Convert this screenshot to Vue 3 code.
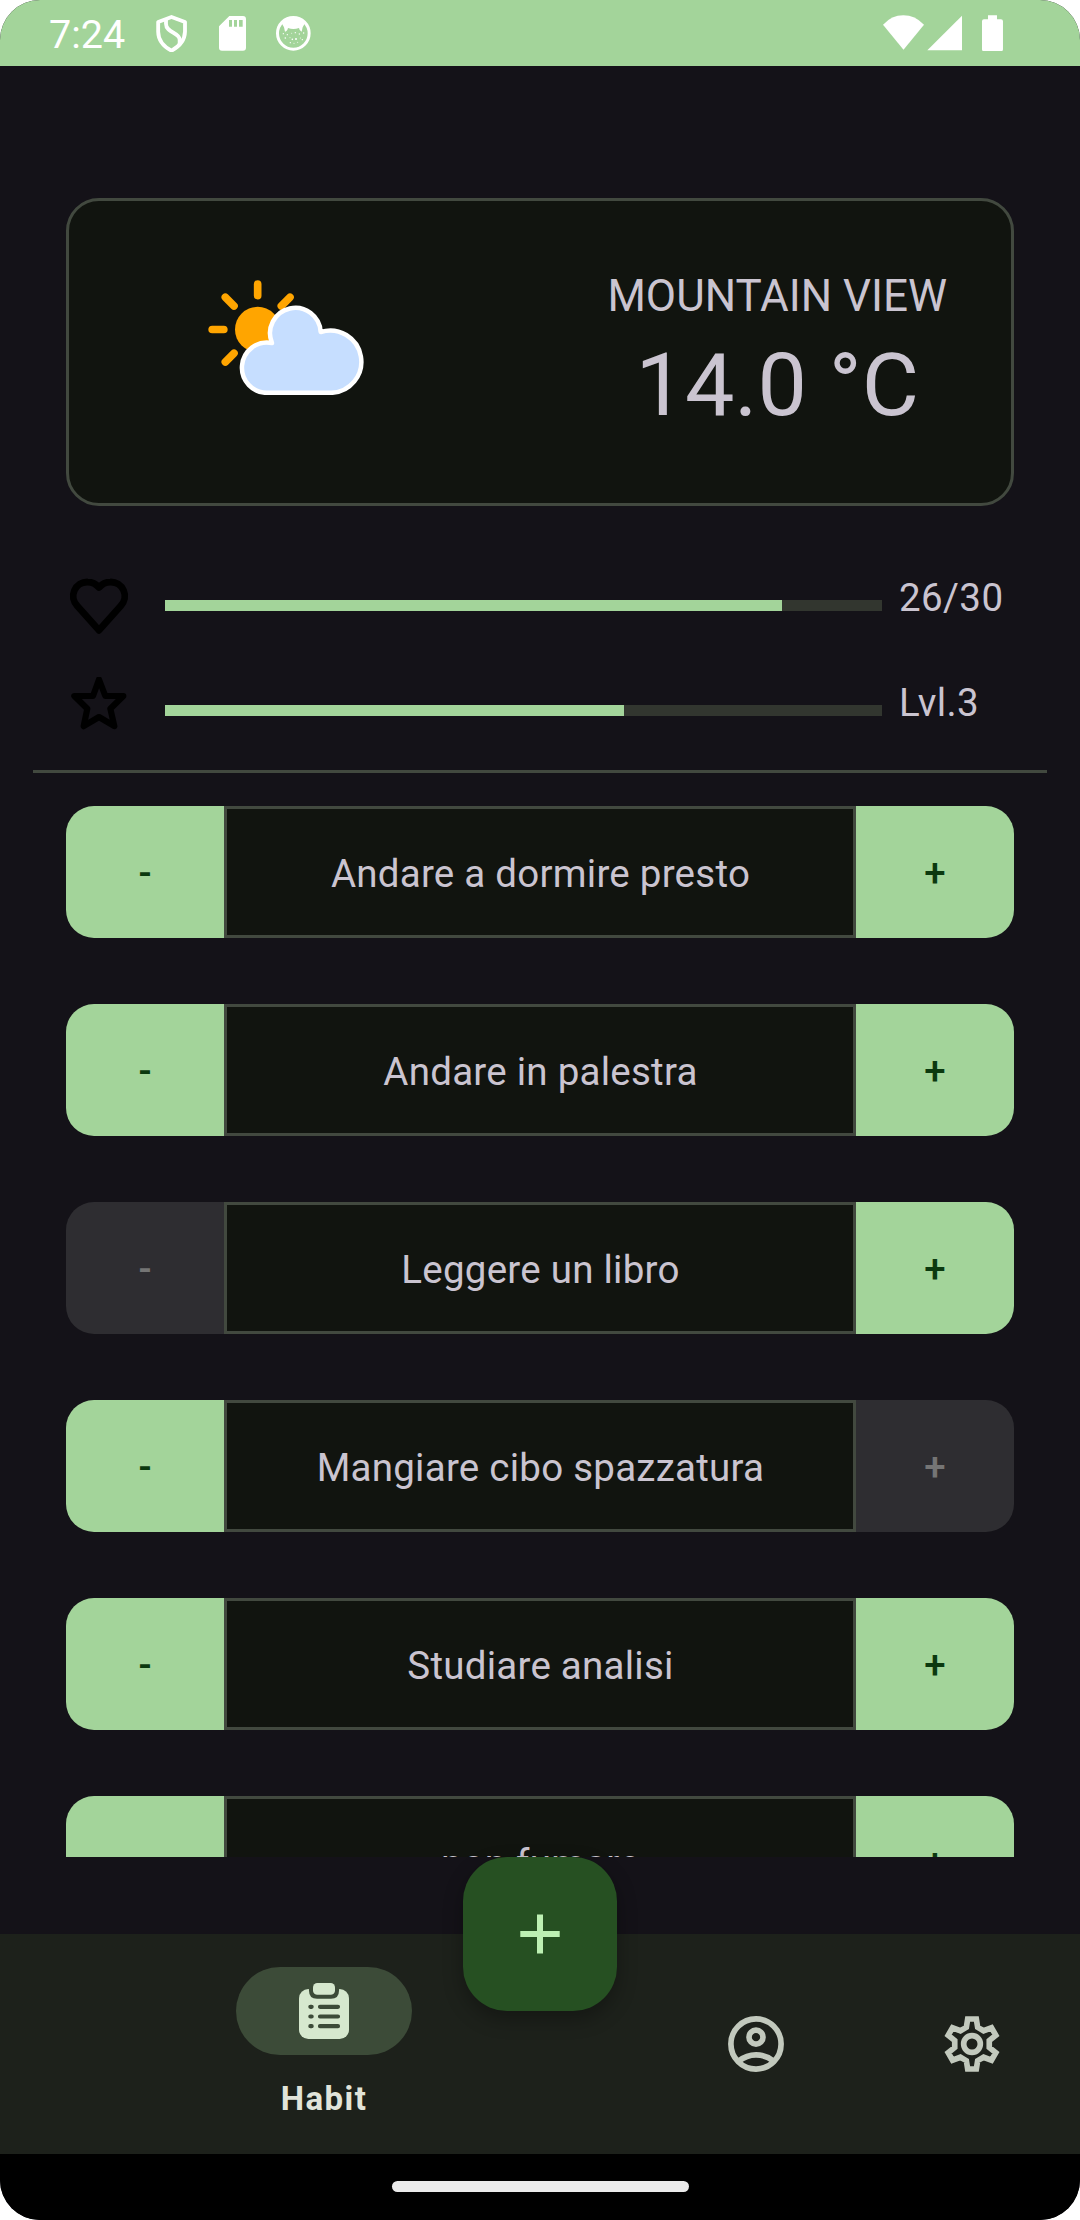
<script setup>
const stats = [
  { icon: 'heart', percent: 86.1, label: '26/30' },
  { icon: 'star', percent: 64, label: 'Lvl.3' },
]

const habits = [
  { name: 'Andare a dormire presto', minus: true, plus: true },
  { name: 'Andare in palestra', minus: true, plus: true },
  { name: 'Leggere un libro', minus: false, plus: true },
  { name: 'Mangiare cibo spazzatura', minus: true, plus: false },
  { name: 'Studiare analisi', minus: true, plus: true },
  { name: 'non fumare', minus: true, plus: true },
]
</script>

<template>
  <div class="screen">
    <header class="status">
      <span class="time">7:24</span>
      <svg class="shield" viewBox="467 44 93 113" width="31" height="37.67">
        <path d="M513.500 50L554 65V94Q553 130 513.500 151Q474 130 473.500 94V65Z" fill="none" stroke="#fff" stroke-width="11.500" stroke-linejoin="round" />
        <path d="M497 56V70C497 98 538 96 538 118V134" fill="none" stroke="#fff" stroke-width="11.500" />
      </svg>
      <svg class="sd" viewBox="657 48 81 104" width="27" height="34.67">
        <path fill="#fff" fill-rule="evenodd" d="M688 48H729Q738 48 738 57V143Q738 152 729 152H666Q657 152 657 143V79ZM687 60V80H696V60ZM702 60V80H711V60ZM717 60V80H728V60Z" />
      </svg>
      <svg class="face" viewBox="828 48 104 104" width="34.67" height="34.67">
        <circle cx="880" cy="100" r="47.500" fill="none" stroke="#fff" stroke-width="9" />
        <path fill="#fff" d="M843 66Q880 36 917 66L908 82L905 95Q898 93 897 84Q880 90 864 84Q862 94 855 95L852 82Z" />
        <g fill="#fff">
          <circle cx="850" cy="101" r="2" /><circle cx="862" cy="104" r="2" /><circle cx="875" cy="100" r="1.500" /><circle cx="886" cy="98" r="2" />
          <circle cx="898" cy="102" r="2" /><circle cx="911" cy="99" r="2" /><circle cx="856" cy="114" r="2.500" /><circle cx="870" cy="113" r="1.500" />
          <circle cx="877" cy="118" r="2.500" /><circle cx="888" cy="117" r="3" /><circle cx="901" cy="114" r="1.500" /><circle cx="907" cy="119" r="2" />
          <circle cx="871" cy="128" r="2" /><circle cx="882" cy="130" r="1.500" /><circle cx="893" cy="127" r="1.500" />
        </g>
      </svg>
      <svg class="signals" viewBox="189 44 361 110" width="120.33" height="36.67" fill="#fff">
        <path d="M189 73Q215 45 250 45T312 73L250.500 148Z" />
        <path d="M426 46V150H322Z" />
        <path d="M504 45H531V57H543Q549 57 549 63V147Q549 153 543 153H492Q486 153 486 147V63Q486 57 492 57H504Z" />
      </svg>
    </header>

    <main class="content">
      <section class="weather">
        <svg class="weather-icon" viewBox="474 299 471 346" width="157" height="115.33">
          <circle cx="623" cy="447.500" r="68" fill="#ffa500" />
          <path d="M623 311V346M486.500 447.500H521.500M526 351L552 377M720 351L694 377M526 545L552 519" stroke="#ffa500" stroke-width="23" stroke-linecap="round" />
          <path d="M654 637.500A75.500 75.500 0 1 1 666 488A76 76 0 1 1 812 455A93.500 93.500 0 1 1 843.500 637.500Z" fill="#c6deff" stroke="#fff" stroke-width="13.500" stroke-linejoin="round" />
        </svg>
        <div class="weather-text">
          <div class="city">MOUNTAIN VIEW</div>
          <div class="temp">14.0 °C</div>
        </div>
      </section>

      <section class="stats">
        <div v-for="s in stats" :key="s.icon" class="stat">
          <svg class="stat-icon" viewBox="138 66 198 198" width="66" height="66" fill="none" stroke="#000" stroke-linejoin="round">
            <path v-if="s.icon === 'heart'" d="M237 241L172 168A42.200 42.200 0 0 1 203 96Q223 96 237 112.500Q251 96 271 96A42.200 42.200 0 0 1 302 168Z" stroke-width="20.500" />
            <path v-else d="M237 73.500L256 123H310L271 161L283 213.500L237 186L191 213.500L202 161L163 123H219Z" stroke-width="18.500" />
          </svg>
          <div class="track"><div class="fill" :style="{ width: s.percent + '%' }"></div></div>
          <span class="stat-label">{{ s.label }}</span>
        </div>
      </section>

      <hr class="divider" />

      <section class="habits">
        <div v-for="h in habits" :key="h.name" class="habit">
          <button class="btn left" :disabled="!h.minus">-</button>
          <div class="name">{{ h.name }}</div>
          <button class="btn right" :disabled="!h.plus">+</button>
        </div>
      </section>
    </main>

    <nav class="nav">
      <div class="item active">
        <div class="pill">
          <svg viewBox="297 159 150 168" width="50" height="56">
            <rect x="297" y="177" width="150" height="150" rx="28" fill="#d6e8ce" />
            <path d="M324 170Q327 176 327 182Q327 206 351 206H393Q417 206 417 182Q417 176 420 170Z" fill="#3c4b38" />
            <rect x="339" y="159" width="66" height="35.500" rx="13" fill="#d6e8ce" />
            <g stroke="#3c4b38" stroke-width="12.500" stroke-linecap="round">
              <path d="M360 230.500H414M360 259.500H414M360 288.500H414M331 230.500H335M331 259.500H335M331 288.500H335" />
            </g>
          </svg>
        </div>
        <span class="nav-label">Habit</span>
      </div>
      <button class="fab" aria-label="Add">
        <svg viewBox="0 0 40 40" width="40" height="40"><path d="M20 0.500V39.500M0.300 20H39.700" stroke="#bdf0b3" stroke-width="6" /></svg>
      </button>
      <div class="item account">
        <svg viewBox="129 153 198 198" width="66" height="66" fill="none" stroke="#c2c9bd" stroke-width="17">
          <circle cx="228" cy="252" r="75.300" />
          <circle cx="228" cy="231.500" r="21" />
          <path d="M176 303Q200 284.500 228 284.500T280 303" />
        </svg>
      </div>
      <div class="item settings">
        <svg viewBox="-99 -99 198 198" width="66" height="66" fill="none" stroke="#c2c9bd" stroke-width="17">
          <path d="M-13 -75H13L17 -50L34.800 -39.700L58.500 -48.800L71.500 -26.200L51.800 -10.300V10.300L71.500 26.200L58.500 48.800L34.800 39.700L17 50L13 75H-13L-17 50L-34.800 39.700L-58.500 48.800L-71.500 26.200L-51.800 10.300V-10.300L-71.500 -26.200L-58.500 -48.800L-34.800 -39.700L-17 -50Z" />
          <circle r="25" />
        </svg>
      </div>
    </nav>

    <footer class="gesture"><div class="handle"></div></footer>
  </div>
</template>

<style>
body {
  margin: 0;
  background: #fff;
}
</style>

<style scoped>
.screen {
  width: 1080px;
  height: 2220px;
  display: flex;
  flex-direction: column;
  overflow: hidden;
  border-radius: 40px;
  background: #141218;
  color: #cac4d0;
  font-family: Roboto, "Noto Sans", sans-serif;
  box-sizing: border-box;
}
svg {
  display: block;
  flex: none;
}
.status {
  height: 66px;
  flex: none;
  display: flex;
  align-items: flex-start;
  background: #a3d49a;
  color: #fff;
}
.time {
  width: 76px;
  margin: 11px 0 0 49px;
  font-size: 39.5px;
  line-height: 47px;
  white-space: nowrap;
}
.shield {
  margin: 14.67px 0 0 30.67px;
}
.sd {
  margin: 16px 0 0 32.33px;
}
.face {
  margin: 16px 0 0 30px;
}
.signals {
  margin: 14.67px 76.67px 0 auto;
}
.content {
  height: 1791px;
  flex: none;
  overflow: hidden;
}
.weather {
  height: 308px;
  margin: 132px 66px 0;
  box-sizing: border-box;
  border: 3px solid #42493f;
  border-radius: 33px;
  background: #11140f;
  display: flex;
  align-items: flex-start;
}
.weather-icon {
  margin: 78.67px 0 0 139px;
}
.weather-text {
  margin: 69px 64px 0 auto;
  text-align: center;
}
.city {
  font-size: 44px;
  line-height: 52px;
}
.temp {
  margin-top: 11px;
  font-size: 88px;
  line-height: 104px;
}
.stats {
  margin: 66px 66px 0;
}
.stat {
  height: 66px;
  margin-bottom: 39px;
  display: flex;
  align-items: center;
}
.track {
  width: 717px;
  height: 11px;
  margin: 1px 17px 0 33px;
  background: #32362f;
}
.fill {
  height: 100%;
  background: #a3d49a;
}
.stat-label {
  font-size: 38.5px;
  line-height: 46px;
  letter-spacing: 0.4px;
  margin-top: -14px;
  white-space: nowrap;
}
.divider {
  height: 3px;
  margin: -12px 33px 33px;
  border: 0;
  background: #42493f;
}
.habit {
  height: 132px;
  margin: 0 66px 66px;
  display: flex;
}
.btn {
  width: 158px;
  padding: 2px 0 0;
  border: 0;
  background: #a3d49a;
  color: #0b390f;
  font: 500 38.5px/46px Roboto, "Noto Sans", sans-serif;
}
.left {
  border-radius: 28px 0 0 28px;
}
.right {
  border-radius: 0 28px 28px 0;
}
.btn:disabled {
  background: #2e2d31;
  color: #757575;
}
.name {
  flex: 1;
  box-sizing: border-box;
  border: 3px solid #42493f;
  background: #11140f;
  display: flex;
  align-items: center;
  justify-content: center;
  font-size: 38.5px;
  line-height: 46px;
  letter-spacing: 0.25px;
  padding: 4px 0 0 1px;
}
.nav {
  height: 220px;
  margin-top: 77px;
  flex: none;
  display: flex;
  background: #1d211b;
}
.item {
  display: flex;
  flex-direction: column;
  align-items: center;
}
.active {
  width: 176px;
  margin-left: 236px;
  padding-top: 33px;
}
.pill {
  width: 176px;
  height: 88px;
  border-radius: 44px;
  background: #3c4b38;
  display: flex;
  align-items: center;
  justify-content: center;
}
.nav-label {
  margin-top: 22px;
  font-size: 33px;
  line-height: 44px;
  font-weight: 700;
  letter-spacing: 1.4px;
  color: #e1e4da;
}
.fab {
  width: 154px;
  height: 154px;
  margin: -77px 0 0 51px;
  padding: 0;
  border: 0;
  border-radius: 44px;
  background: #265022;
  box-shadow: 0 8px 20px rgba(0, 0, 0, 0.3);
  display: flex;
  align-items: center;
  justify-content: center;
}
.account {
  margin: 77px 0 0 106px;
}
.settings {
  margin: 77px 0 0 150px;
}
.gesture {
  height: 66px;
  flex: none;
  background: #000;
  display: flex;
  justify-content: center;
}
.handle {
  width: 297px;
  height: 11px;
  margin-top: 27px;
  border-radius: 6px;
  background: #ebebeb;
}
</style>
